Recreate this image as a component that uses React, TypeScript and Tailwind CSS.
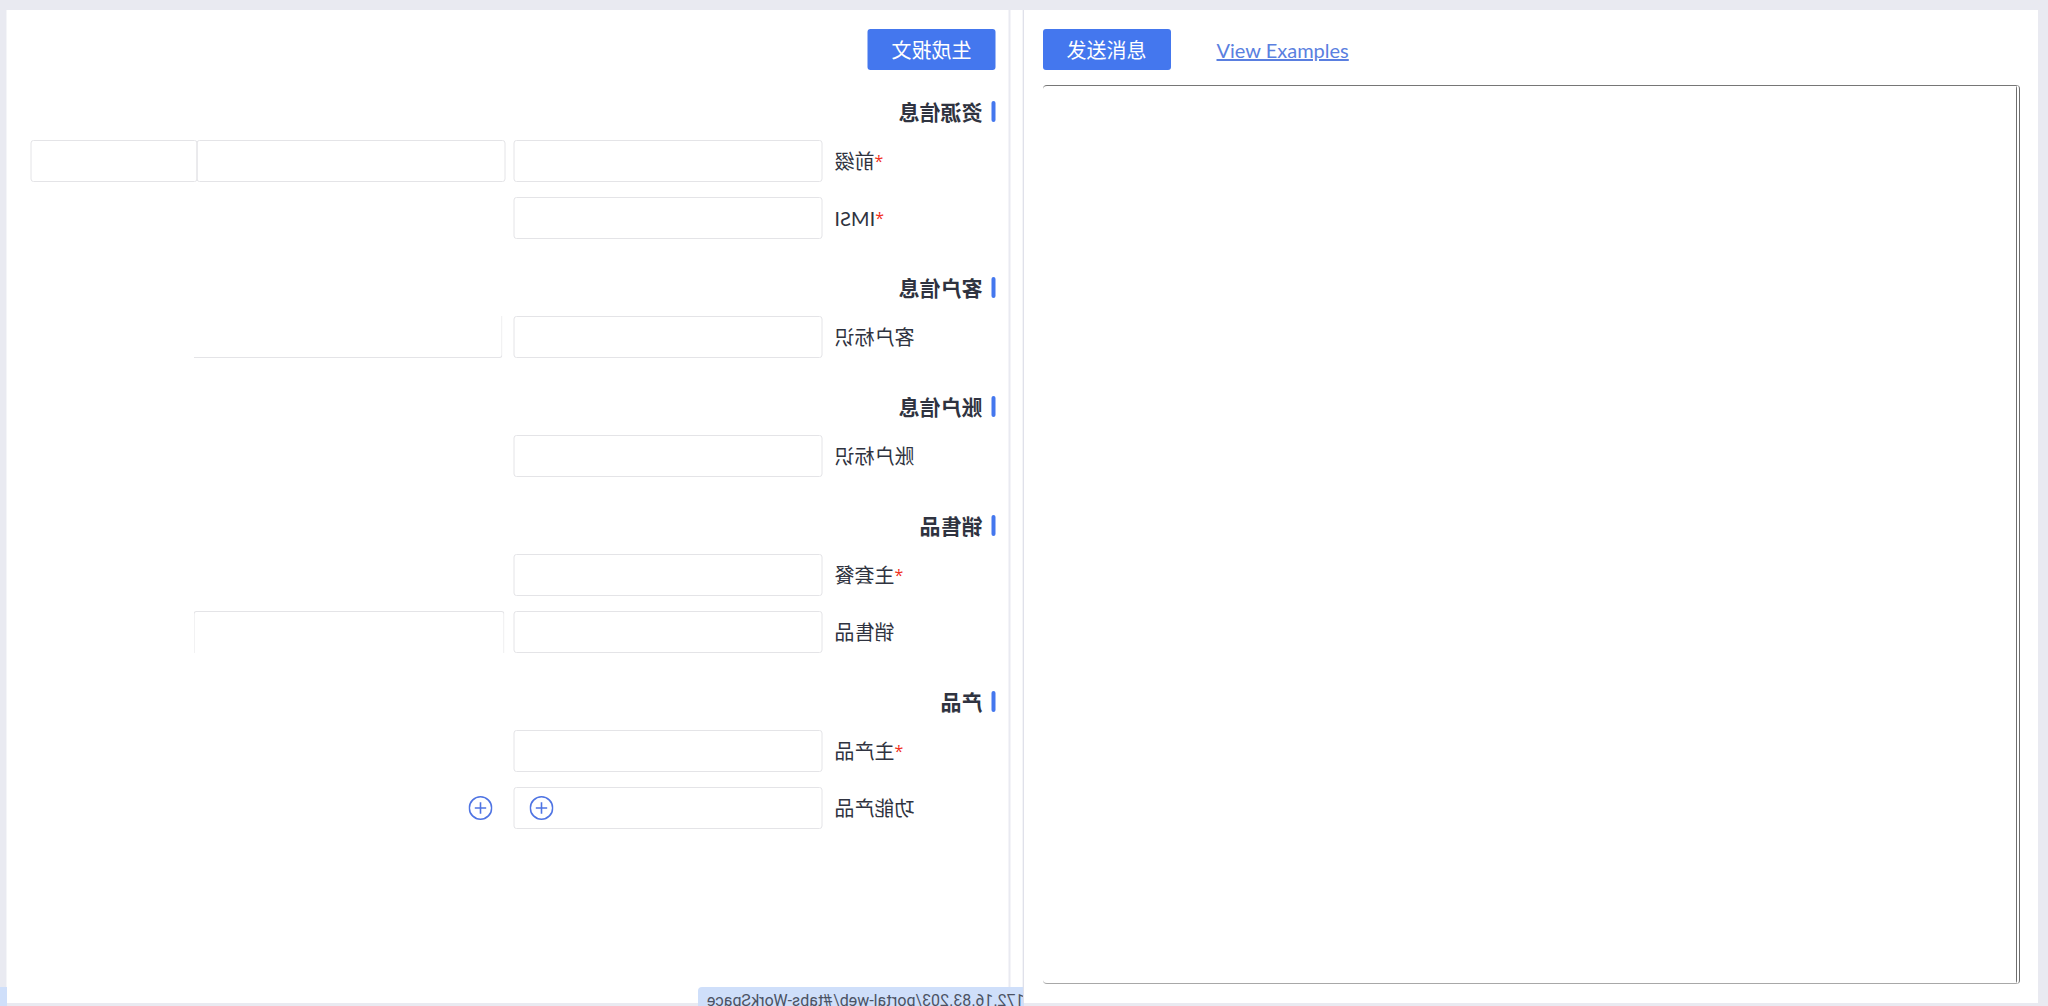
import React, { useState } from 'react';

type FieldStyle = 'full' | 'openStart' | 'openBottom' | 'joined';

interface Row {
  id: string;
  label: string;
  required?: boolean;
  extra?: FieldStyle[];
  addable?: boolean;
}

interface Section {
  title: string;
  rows: Row[];
}

const sections: Section[] = [
  {
    title: '资源信息',
    rows: [
      { id: 'prefix', label: '前缀', required: true, extra: ['full', 'joined'] },
      { id: 'imsi', label: 'IMSI', required: true },
    ],
  },
  {
    title: '客户信息',
    rows: [{ id: 'customer', label: '客户标识', extra: ['openStart'] }],
  },
  {
    title: '账户信息',
    rows: [{ id: 'account', label: '账户标识' }],
  },
  {
    title: '销售品',
    rows: [
      { id: 'plan', label: '主套餐', required: true },
      { id: 'offer', label: '销售品', extra: ['openBottom'] },
    ],
  },
  {
    title: '产品',
    rows: [
      { id: 'mainProduct', label: '主产品', required: true },
      { id: 'feature', label: '功能产品', addable: true },
    ],
  },
];

const fieldStyles: Record<FieldStyle, string> = {
  full: 'ml-2 border rounded-[3px]',
  joined: '-ml-px border rounded-[3px]',
  openStart: 'ml-[11px] -mr-[3px] border-l border-b rounded-bl-[3px]',
  openBottom: 'ml-[9px] -mr-[3px] border-x border-t rounded-t-[3px]',
};

const PlusCircle: React.FC = () => (
  <svg viewBox="0 0 24 24" className="size-6" fill="none" stroke="currentColor" strokeWidth="1.6">
    <circle cx="12" cy="12" r="11.2" />
    <path d="M6.3 12h11.4M12 6.3v11.4" />
  </svg>
);

const FormRow: React.FC<{ row: Row }> = ({ row }) => (
  <div className="flex items-center">
    <label htmlFor={row.id} className="flex w-[161px] mr-3 shrink-0 items-center justify-end text-xl leading-6">
      {row.required && <span className="font-['Open_Sans'] text-base leading-6 text-[#f0301c]">*</span>}
      {row.label}
    </label>
    <div className="grid flex-1 grid-cols-[309fr_317fr_166fr] items-center">
      <div className="relative">
        <input
          id={row.id}
          type="text"
          className="block h-[42px] w-full px-3 border border-[#e4e4e7] rounded-[3px] text-xl outline-none focus:border-[#4477ee]"
        />
        {row.addable && (
          <button type="button" aria-label="Add" className="absolute right-4 top-[9px] text-[#4f74e3]">
            <PlusCircle />
          </button>
        )}
      </div>
      {row.extra?.map((style, i) => (
        <input
          key={i}
          type="text"
          aria-label={`${row.label} ${i + 2}`}
          className={`block h-[42px] min-w-0 px-3 border-[#e4e4e7] text-xl outline-none ${fieldStyles[style]}`}
        />
      ))}
      {row.addable && (
        <button type="button" aria-label="Add row" className="ml-[21px] size-6 text-[#4f74e3]">
          <PlusCircle />
        </button>
      )}
    </div>
  </div>
);

const App: React.FC = () => {
  const [message, setMessage] = useState('');

  return (
    <div className="relative grid min-h-screen grid-cols-2 overflow-hidden bg-[#e9eaf1] pt-[10px] pr-[10px] pb-[3px] pl-[7px] font-['Lato','Noto_Sans_CJK_SC',sans-serif] text-[#2f3340]">
      {/* Generator form, flipped horizontally */}
      <section className="flex -scale-x-100 bg-white">
        <div className="w-3 shrink-0" />
        <div className="flex-1 border-l-2 border-[#e9eaf1] pt-[19px] pr-6 pl-[13px]">
          <button type="button" className="block h-[41px] w-32 rounded-[3px] bg-[#4477ee] text-xl leading-6 text-white">
            生成报文
          </button>
          <form className="mt-[31px] flex flex-col gap-[38px]">
            {sections.map((section) => (
              <div key={section.title}>
                <h2 className="flex h-[21px] items-center gap-[9px] text-[21px] leading-[20px] font-bold">
                  <span className="h-full w-1 rounded-xs bg-[#4477ee]" />
                  {section.title}
                </h2>
                <div className="mt-[18px] flex flex-col gap-[15px]">
                  {section.rows.map((row) => (
                    <FormRow key={row.id} row={row} />
                  ))}
                </div>
              </div>
            ))}
          </form>
        </div>
      </section>

      {/* Message panel */}
      <section className="z-10 flex flex-col border-l border-[#e0e1ea] bg-white pt-[19px] pr-[18px] pb-[19px] pl-[19px]">
        <div className="flex items-center gap-[46px]">
          <button type="button" className="h-[41px] w-32 rounded-[3px] bg-[#4477ee] text-xl leading-6 text-white">
            发送消息
          </button>
          <a href="#examples" className="text-xl leading-6 text-[#5a7fe0] underline">
            View Examples
          </a>
        </div>
        <textarea
          aria-label="Message"
          value={message}
          onChange={(e) => setMessage(e.target.value)}
          className="mt-[15px] w-full flex-1 resize-none rounded-sm border-t border-r-4 border-b border-t-[#767676] border-r-[#6e6e6e] border-b-[#a8a8a8] [border-right-style:double] p-3 text-xl outline-none"
        />
      </section>

      {/* Link status bubble */}
      <div className="absolute bottom-0 left-0 h-[19px] w-[7px] bg-[#cfdffa]" />
      <div className="absolute right-1/2 bottom-0 flex h-[19px] w-[326px] -scale-x-100 justify-end overflow-hidden rounded-tr-sm bg-[#cfdffa] pr-[9px] font-['Roboto'] text-base leading-7 whitespace-nowrap text-[#4b5263]">
        17172.16.83.203/portal-web/#tabs-WorkSpace
      </div>
    </div>
  );
};

export default App;
